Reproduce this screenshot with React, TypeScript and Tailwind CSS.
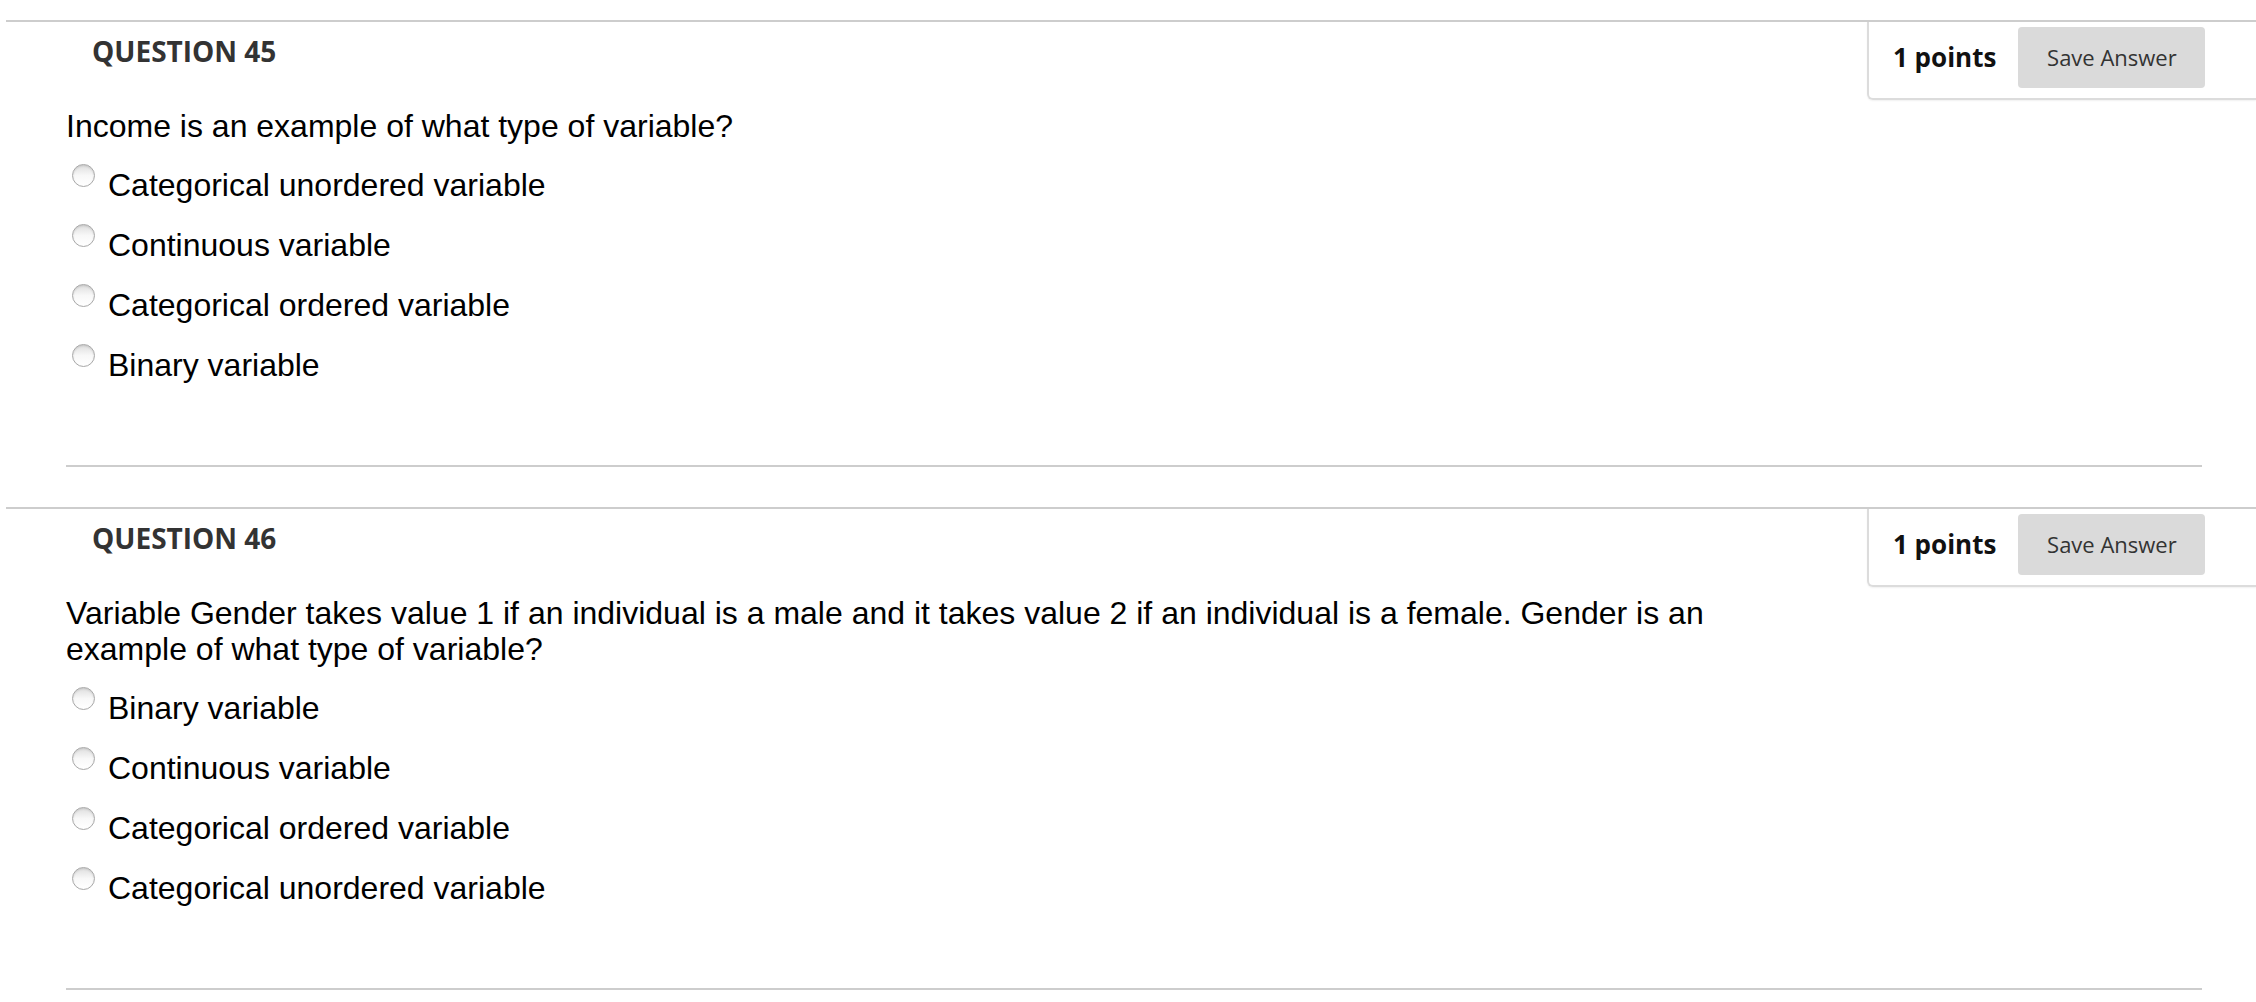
import React from "react";

type Q = { num: number; text: string; options: string[] };

const questions: Q[] = [
  {
    num: 45,
    text: "Income is an example of what type of variable?",
    options: ["Categorical unordered variable", "Continuous variable", "Categorical ordered variable", "Binary variable"],
  },
  {
    num: 46,
    text: "Variable Gender takes value 1 if an individual is a male and it takes value 2 if an individual is a female. Gender is an example of what type of variable?",
    options: ["Binary variable", "Continuous variable", "Categorical ordered variable", "Categorical unordered variable"],
  },
];

export default function App() {
  return (
    <div className="min-h-screen w-full overflow-hidden bg-white pt-[20px]">
      {questions.map((q) => <Question key={q.num} q={q} />)}
    </div>
  );
}

function Question({ q }: { q: Q }) {
  return (
    <section className="mb-[40px]">
      <div className="ml-[6px] flex items-start justify-between border-t-2 border-[#cdcdcd]">
        <h2 className="ml-[86px] mt-[15px] font-['Open_Sans',sans-serif] text-[28px] font-bold leading-[28px] text-[#333]">QUESTION {q.num}</h2>
        <div className="flex h-[78px] w-[389px] flex-none items-start rounded-bl-[6px] border-b-2 border-l-2 border-[#dcdcdc] pl-[24px] pt-[5px] shadow-[0_1px_2px_rgba(0,0,0,0.06)]">
          <span className="font-['Open_Sans',sans-serif] text-[26px] font-bold leading-[61px] text-[#111]">1 points</span>
          <button className="ml-[22px] h-[61px] w-[187px] rounded-[4px] bg-[#dadada] font-['Open_Sans',sans-serif] text-[22px] text-[#333]">Save Answer</button>
        </div>
      </div>
      <div className="ml-[66px] mt-[8px] w-[1700px] font-['Liberation_Sans',Arial,sans-serif] text-[32px] leading-[36px] text-black">
        <p>{q.text}</p>
        <ul className="mt-[23px] flex flex-col gap-[24px]">
          {q.options.map((o) => (
            <li key={o} className="flex items-start">
              <span className="ml-[6px] mt-[-3px] h-[23px] w-[23px] flex-none rounded-full border border-[#a8a8a8] bg-gradient-to-b from-[#dedede] via-[#f8f8f8] to-white shadow-[inset_0_1px_2px_rgba(0,0,0,0.12)]" />
              <label className="ml-[13px]">{o}</label>
            </li>
          ))}
        </ul>
      </div>
      <div className="ml-[66px] mt-[82px] h-[2px] w-[2136px] bg-[#cdcdcd]" />
    </section>
  );
}
